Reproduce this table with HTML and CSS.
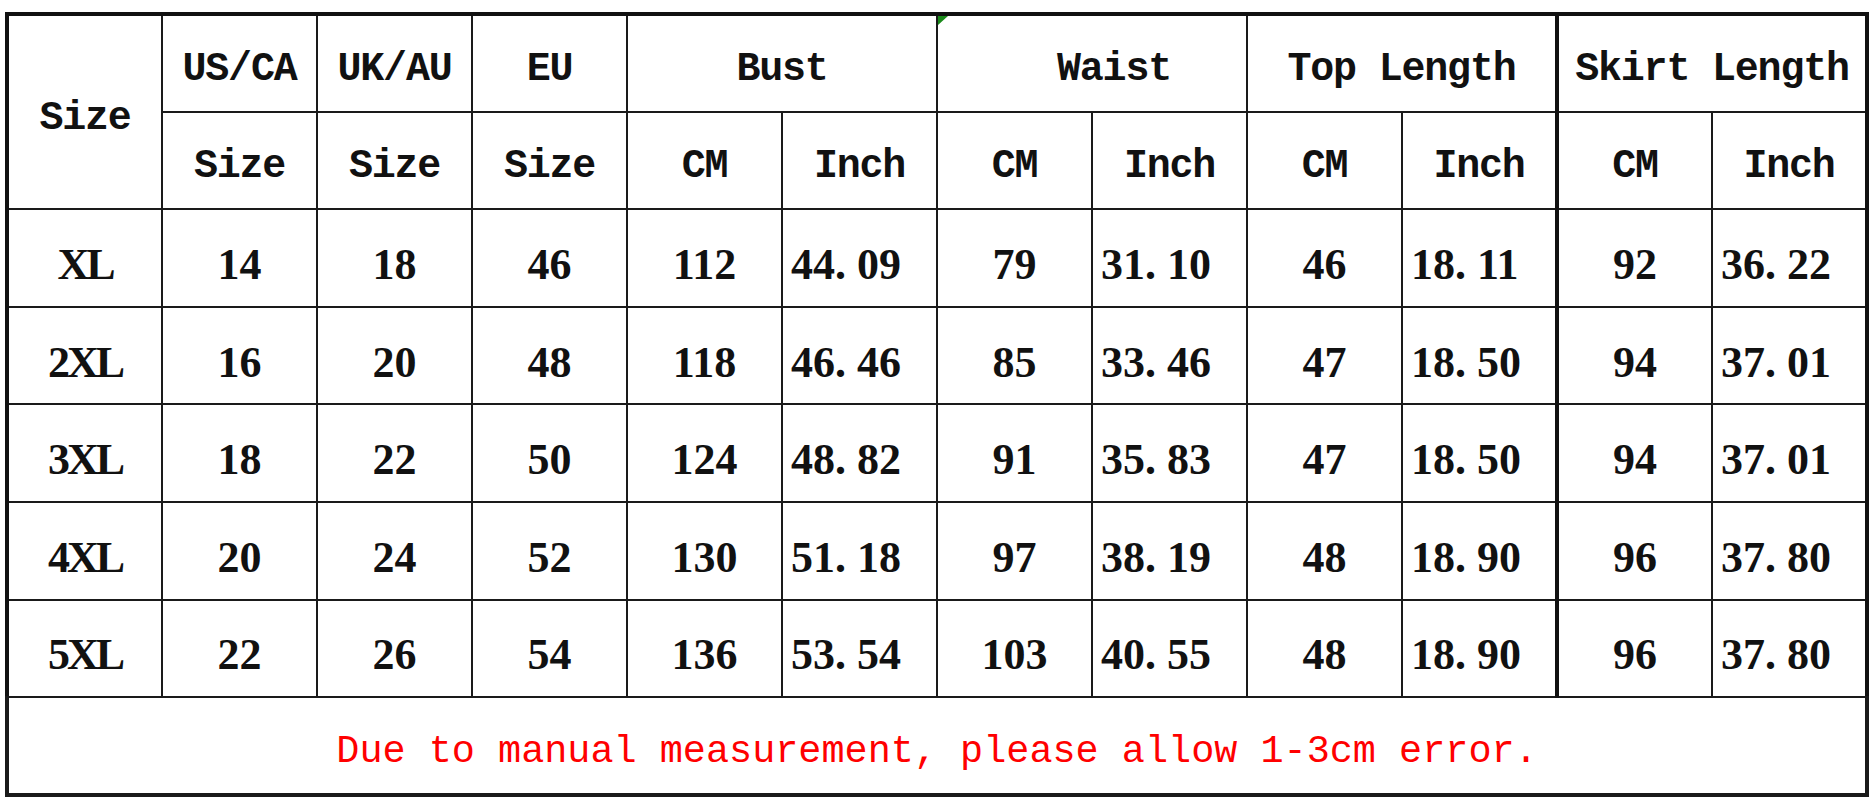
FILE: index.html
```html
<!DOCTYPE html>
<html lang="en">
<head>
<meta charset="utf-8">
<title>Size Chart</title>
<link rel="stylesheet" href="styles.css">
</head>
<body>
<div class="sheet">
  <table class="chart">
    <colgroup>
      <col class="c"><col class="c"><col class="c"><col class="c"><col class="c"><col class="c">
      <col class="c"><col class="c"><col class="c"><col class="c"><col class="c"><col class="c">
    </colgroup>
    <thead>
      <tr>
        <th rowspan="2" class="hd">Size</th>
        <th class="hd">US/CA</th>
        <th class="hd">UK/AU</th>
        <th class="hd">EU</th>
        <th colspan="2" class="hd">Bust</th>
        <th colspan="2" class="hd waist">Waist</th>
        <th colspan="2" class="hd">Top Length</th>
        <th colspan="2" class="hd sk">Skirt Length</th>
      </tr>
      <tr>
        <th class="hd">Size</th>
        <th class="hd">Size</th>
        <th class="hd">Size</th>
        <th class="hd">CM</th>
        <th class="hd">Inch</th>
        <th class="hd">CM</th>
        <th class="hd">Inch</th>
        <th class="hd">CM</th>
        <th class="hd">Inch</th>
        <th class="hd sk">CM</th>
        <th class="hd">Inch</th>
      </tr>
    </thead>
    <tbody>
      <tr>
        <td class="lbl">XL</td><td class="num">14</td><td class="num">18</td><td class="num">46</td>
        <td class="num">112</td><td class="inch">44<span class="dot">.</span>09</td>
        <td class="num">79</td><td class="inch">31<span class="dot">.</span>10</td>
        <td class="num">46</td><td class="inch">18<span class="dot">.</span>11</td>
        <td class="num sk">92</td><td class="inch">36<span class="dot">.</span>22</td>
      </tr>
      <tr>
        <td class="lbl">2XL</td><td class="num">16</td><td class="num">20</td><td class="num">48</td>
        <td class="num">118</td><td class="inch">46<span class="dot">.</span>46</td>
        <td class="num">85</td><td class="inch">33<span class="dot">.</span>46</td>
        <td class="num">47</td><td class="inch">18<span class="dot">.</span>50</td>
        <td class="num sk">94</td><td class="inch">37<span class="dot">.</span>01</td>
      </tr>
      <tr>
        <td class="lbl">3XL</td><td class="num">18</td><td class="num">22</td><td class="num">50</td>
        <td class="num">124</td><td class="inch">48<span class="dot">.</span>82</td>
        <td class="num">91</td><td class="inch">35<span class="dot">.</span>83</td>
        <td class="num">47</td><td class="inch">18<span class="dot">.</span>50</td>
        <td class="num sk">94</td><td class="inch">37<span class="dot">.</span>01</td>
      </tr>
      <tr>
        <td class="lbl">4XL</td><td class="num">20</td><td class="num">24</td><td class="num">52</td>
        <td class="num">130</td><td class="inch">51<span class="dot">.</span>18</td>
        <td class="num">97</td><td class="inch">38<span class="dot">.</span>19</td>
        <td class="num">48</td><td class="inch">18<span class="dot">.</span>90</td>
        <td class="num sk">96</td><td class="inch">37<span class="dot">.</span>80</td>
      </tr>
      <tr>
        <td class="lbl">5XL</td><td class="num">22</td><td class="num">26</td><td class="num">54</td>
        <td class="num">136</td><td class="inch">53<span class="dot">.</span>54</td>
        <td class="num">103</td><td class="inch">40<span class="dot">.</span>55</td>
        <td class="num">48</td><td class="inch">18<span class="dot">.</span>90</td>
        <td class="num sk">96</td><td class="inch">37<span class="dot">.</span>80</td>
      </tr>
      <tr>
        <td colspan="12" class="note">Due to manual measurement, please allow 1-3cm error.</td>
      </tr>
    </tbody>
  </table>
</div>
</body>
</html>
```

FILE: styles.css
```css
html, body {
  margin: 0;
  padding: 0;
  background: #ffffff;
}

.sheet {
  padding: 12px 0 0 5px;
}

.chart {
  border-collapse: collapse;
  table-layout: fixed;
  width: 1860px;
  border: 4px solid #111111;
  color: #111111;
}

.chart col.c {
  width: 155px;
}

.chart tr {
  height: 97.6px;
}

.chart th,
.chart td {
  border: 2px solid #1a1a1a;
  padding: 14px 0 0 0;
  text-align: center;
  vertical-align: middle;
  white-space: nowrap;
  overflow: visible;
}

.chart .sk {
  border-left: 4px solid #111111;
}

.hd {
  font-family: "Liberation Mono", "DejaVu Sans Mono", monospace;
  font-weight: bold;
  font-size: 40px;
  letter-spacing: -1.2px;
  line-height: 1;
}

.chart th.waist {
  position: relative;
  padding-left: 44px;
}

.waist::before {
  content: "";
  position: absolute;
  top: 0;
  left: 0;
  width: 0;
  height: 0;
  border-top: 9px solid #1b8a1b;
  border-right: 10px solid transparent;
}

.num,
.inch,
.lbl {
  font-family: "Liberation Serif", "Times New Roman", serif;
  font-weight: bold;
  font-size: 44px;
  line-height: 1;
}

.lbl {
  letter-spacing: -3px;
}

.chart td.inch {
  text-align: left;
  padding-left: 8px;
}

.dot {
  padding-right: 11px;
}

.chart td.note {
  font-family: "Liberation Mono", "DejaVu Sans Mono", monospace;
  font-size: 38.5px;
  color: #ff0000;
  line-height: 1;
  border-left-width: 4px;
  border-right-width: 4px;
  border-bottom-width: 4px;
}
```
